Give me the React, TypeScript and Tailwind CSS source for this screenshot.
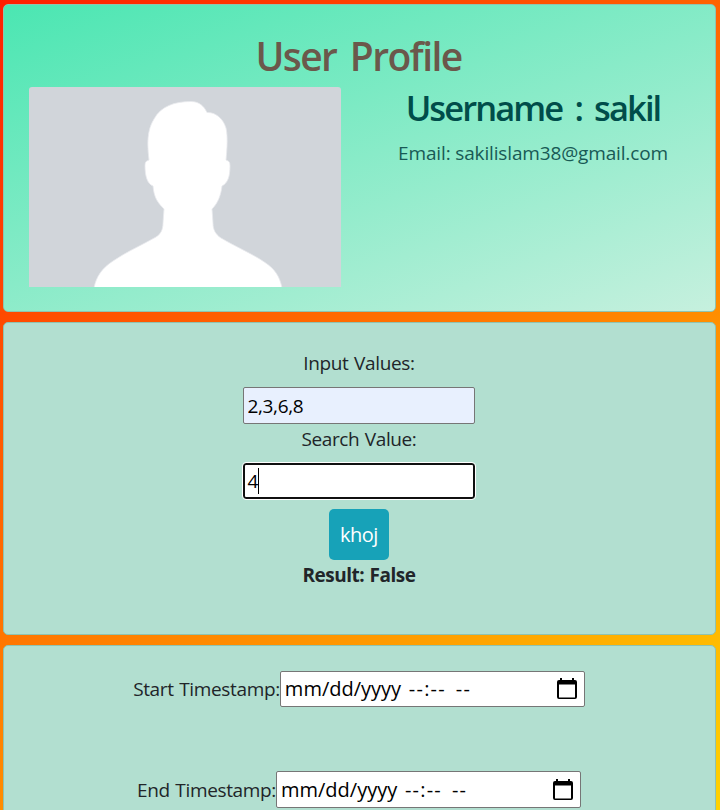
import type { ReactNode } from 'react';

function Card({ className, children }: { className: string; children: ReactNode }) {
  return (
    <section className={`mr-1 ml-[3px] rounded-[5px] border border-[#8fc3b0] ${className}`}>
      {children}
    </section>
  );
}

function Avatar() {
  return (
    <svg className="block h-[200px] w-[312px] rounded-t-[3px]" viewBox="0 0 312 200" aria-label="Avatar">
      <rect width="312" height="200" fill="#d1d5da" />
      <path
        fill="#fff"
        stroke="#e8eaed"
        strokeWidth="0.8"
        d="M65 201 C67 190 73 181 84 174 C97 165 113 158 127 150 C132 147 134 142 134 136 L135 122 C129 116 125 111 124 99 C118 97 116 88 116 79 C116 75 117 74 120 73 C118 57 118 43 125 32 C132 19 146 14.5 162 14.5 C170 14.5 175 19 178 25.5 C186 25 194 31 197 41 C199 50 198 62 197 73 C200 74 201 75 201 79 C201 89 199 96 193 99 C192 108 189 116 183 122 L184 136 C184 142 186 147 192 151 C207 160 224 167 236 175.5 C246 182 251 190 253 201 Z"
      />
    </svg>
  );
}

function CalendarIcon() {
  return (
    <svg className="h-[22px] w-5" viewBox="0 0 20 22" aria-hidden="true">
      <path fill="#000" fillRule="evenodd" d="M3 0h2v2h10V0h2v2h1a2 2 0 0 1 2 2v15a2 2 0 0 1-2 2H2a2 2 0 0 1-2-2V4a2 2 0 0 1 2-2h1zM2 6.5v13h16v-13z" />
    </svg>
  );
}

function TimestampRow({ label, className }: { label: string; className: string }) {
  return (
    <div className={`flex items-stretch justify-center ${className}`}>
      <label className="tracking-[-0.35px] whitespace-nowrap [word-spacing:1px]">{label}</label>
      <div className="flex w-[305px] items-start justify-between rounded-[2px] border border-[#767676] bg-white pr-[7px] pl-1 text-black">
        <span className="-mt-px flex text-[20px] whitespace-pre">
          <span className="w-[124px]">mm/dd/yyyy</span>
          <span className="w-[47px] tracking-[1.2px]">--:--</span>
          <span className="tracking-[1.2px]">--</span>
        </span>
        <span className="flex self-stretch">
          <span className="self-end pb-1.5">
            <CalendarIcon />
          </span>
        </span>
      </div>
    </div>
  );
}

export default function App() {
  return (
    <main className="h-[810px] overflow-hidden bg-[linear-gradient(145deg,#ff1e00,#ffd200)] pt-1 font-['Open_Sans','Noto_Sans',sans-serif] text-[19px] text-[#212529]">
      <Card className="h-[308px] bg-[linear-gradient(160deg,#4be6b2,#c6f0de)] px-[25px] pt-[27px]">
        <h1 className="h-[55px] pr-0.5 text-center text-[39px] leading-[48px] font-semibold tracking-[-1.6px] text-[#6b584b] [word-spacing:5px]">
          User Profile
        </h1>
        <div className="flex">
          <Avatar />
          <div className="ml-9 w-[312px] text-center text-[#004d4a]">
            <h2 className="h-[54px] text-[34.5px] leading-[42px] font-semibold tracking-[-1.9px] [word-spacing:5px]">
              Username : sakil
            </h2>
            <p className="leading-6 tracking-[-0.15px] text-[#185a55]">Email: sakilislam38@gmail.com</p>
          </div>
        </div>
      </Card>

      <Card className="mt-[10px] flex h-[313px] flex-col items-center bg-[#b2dfd0] pt-[25px] pr-px">
        <label className="h-[39px] leading-[30px] tracking-[-0.35px] [word-spacing:1px]">Input Values:</label>
        <input
          className="mr-px h-[37px] w-[232px] rounded-[2px] border border-[#767676] bg-[#e8f0fe] px-1 tracking-[-0.35px] text-black outline-none"
          defaultValue="2,3,6,8"
        />
        <label className="h-[39px] leading-[30px] tracking-[-0.4px] [word-spacing:1px]">Search Value:</label>
        <div className="mr-px flex h-9 w-[232px] items-center rounded-[3px] border-2 border-[#101010] bg-white pl-[3px] text-black outline-1 outline-white">
          <span>4</span>
          <span className="h-[26px] w-px bg-black" />
        </div>
        <button className="mt-[10px] mr-px h-[51px] w-[60px] rounded-[5px] bg-[#17a2b8] pl-px text-[20px] tracking-[-0.5px] text-white">
          khoj
        </button>
        <strong className="leading-[30px] font-bold tracking-[-0.5px] [word-spacing:1px]">Result: False</strong>
      </Card>

      <Card className="mt-[10px] h-[330px] bg-[#b2dfd0] pt-[25px] pr-px">
        <div className="flex flex-col gap-16">
          <TimestampRow label="Start Timestamp:" className="h-9 leading-9" />
          <TimestampRow label="End Timestamp:" className="h-[37px] leading-[38px]" />
        </div>
      </Card>
    </main>
  );
}
